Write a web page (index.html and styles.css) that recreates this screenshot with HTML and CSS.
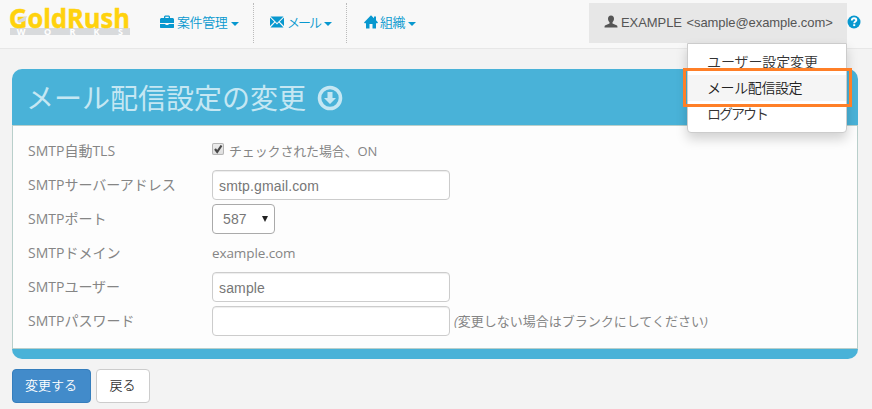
FILE: index.html
```html
<!DOCTYPE html>
<html lang="ja">
<head>
<meta charset="utf-8">
<title>メール配信設定の変更</title>
<link rel="stylesheet" href="styles.css">
</head>
<body>
<header class="navbar">
  <a class="brand">
    <svg class="logo" width="120" height="32" viewBox="0 0 120 32">
      <rect x="0" y="24" width="120" height="7" fill="#d8dadc"/>
      <text class="logo-main" x="-1" y="24" textLength="121" lengthAdjust="spacingAndGlyphs">GoldRush</text>
      <path d="M7 17l7-4 3-1-2 5-6 2z" fill="#d8dadc"/>
      <g class="logo-sub"><text x="11" y="31">W</text><text x="37.500" y="31">O</text><text x="62.500" y="31">R</text><text x="86.500" y="31">K</text><text x="110.500" y="31">S</text></g>
    </svg>
  </a>
  <nav class="nav">
    <a class="nav-item nav-cases">
      <svg class="icon" width="14" height="14" viewBox="0 0 14 14"><path fill="currentColor" fill-rule="evenodd" d="M4 3V1.500L5 .5h4l1 1V3h3l1 1v4H0V4l1-1zM5.300 3h3.400V1.700H5.300zM0 9h5.500v1h3V9H14v3.500l-.5.500H.5l-.5-.5z"/></svg>
      <span class="nav-text">案件管理</span><span class="caret"></span>
    </a>
    <a class="nav-item nav-mail">
      <svg class="icon" width="14" height="14" viewBox="0 0 14 14"><path fill="currentColor" d="M.5 1.500h13L7 8zM0 2.500L4.300 6.800 0 11zM14 2.500V11L9.700 6.800zM.5 12.500l4.600-4.900L7 9.500l1.900-1.900 4.600 4.900z"/></svg>
      <span class="nav-text">メール</span><span class="caret"></span>
    </a>
    <a class="nav-item nav-org">
      <svg class="icon" width="14" height="14" viewBox="0 0 14 14"><path fill="currentColor" d="M7 .3l3 3V1.500h2v3.800l2 2.200-.7.700H12V13.500H8.500V9h-3v4.500H2V8.200H.7L0 7.500z"/></svg>
      <span class="nav-text">組織</span><span class="caret"></span>
    </a>
  </nav>
  <div class="account">
    <a class="user">
      <svg class="icon" width="14" height="14" viewBox="0 0 14 14"><path fill="currentColor" d="M7 .5c2 0 3 1.500 3 3.300 0 1.600-.7 2.700-1.500 3.500v1.200l4 1.700c.8.400 1 1 1 2.300H.5c0-1.300.2-1.900 1-2.300l4-1.700V7.300C4.700 6.500 4 5.400 4 3.800 4 2 5 .5 7 .5z"/></svg>
      <span>EXAMPLE &lt;sample@example.com&gt;</span>
    </a>
    <ul class="menu">
      <li class="menu-item">ユーザー設定変更</li>
      <li class="menu-item active">メール配信設定</li>
      <li class="menu-item last">ログアウト</li>
    </ul>
    <div class="highlight"></div>
  </div>
  <a class="help">
    <svg width="14" height="14" viewBox="0 0 14 14"><circle cx="7" cy="7" r="6.500" fill="#0898cf"/><path d="M4.800 5.500C4.800 3.900 5.800 3.300 7 3.300s2.300.7 2.300 1.900C9.300 6.600 7.200 6.600 7.200 8.300" fill="none" stroke="#fff" stroke-width="1.900"/><path d="M6.200 9.200h2v1.900h-2z" fill="#fff"/></svg>
  </a>
</header>

<main class="panel">
  <h1 class="panel-title">
    <span>メール配信設定の変更</span>
    <svg width="26" height="26" viewBox="0 0 26 26"><circle cx="13" cy="13" r="10.500" fill="none" stroke="currentColor" stroke-width="3.600"/><path fill="currentColor" d="M10.500 7h5v6h3.500l-6 6-6-6h3.500z"/></svg>
  </h1>
  <form class="panel-body">
    <div class="row"><label class="label">SMTP自動TLS</label>
      <span class="check"><svg width="12" height="12" viewBox="0 0 12 12"><path d="M3 6l2.200 2.800L9.500 2.500" fill="none" stroke="#484848" stroke-width="2.200"/></svg></span>
      <span class="note">チェックされた場合、ON</span></div>
    <div class="row"><label class="label">SMTPサーバーアドレス</label><input class="field" type="text" value="smtp.gmail.com"></div>
    <div class="row"><label class="label">SMTPポート</label><span class="select"><span>587</span><i class="arrow"></i></span></div>
    <div class="row"><label class="label">SMTPドメイン</label><span class="value">example.com</span></div>
    <div class="row"><label class="label">SMTPユーザー</label><input class="field" type="text" value="sample"></div>
    <div class="row"><label class="label">SMTPパスワード</label><input class="field" type="password"><span class="hint"><i>(</i>変更しない場合はブランクにしてください<i>)</i></span></div>
  </form>
</main>
<div class="actions">
  <button class="btn primary">変更する</button>
  <button class="btn">戻る</button>
</div>
</body>
</html>
```
FILE: styles.css
```css
* { box-sizing: border-box; }
body {
  margin: 0;
  height: 409px;
  overflow: hidden;
  background: #f3f3f3;
  color: #858585;
  font: 14px/20px "Open Sans", "Noto Sans CJK JP", sans-serif;
}
svg { display: block; flex: none; }
.navbar {
  display: flex;
  height: 49px;
  padding-top: 3px;
  background: #f8f8f8;
  border-bottom: 1px solid #e7e7e7;
}
.brand { width: 120px; margin: 1px 19px 0 10px; }
.logo { overflow: visible; }
.logo-main { font: 700 27px "Open Sans", sans-serif; fill: #ffd20d; stroke: #ffd20d; stroke-width: .5px; }
.logo-sub { font: 700 9px "Open Sans", sans-serif; fill: #fff; text-anchor: middle; }
.nav { display: flex; height: 40px; color: #0898cf; }
.nav-item {
  display: flex;
  align-items: center;
  padding-left: 11px;
  font: 350 13px/20px "Noto Sans CJK JP", sans-serif;
  border-right: 1px dotted #bbb;
}
.nav-item .icon { margin: -2px 3px 0 0; }
.nav-text { margin-top: -2px; }
.nav-cases { width: 105px; }
.nav-mail { width: 93px; padding-left: 16px; }
.nav-org { width: 90px; padding-left: 17px; border: 0; }
.nav-cases .nav-text { letter-spacing: -.4px; }
.nav-mail .nav-text { letter-spacing: -2px; }
.nav-org .nav-text { letter-spacing: -.5px; margin-left: -1px; }
.caret {
  border: 4px solid transparent;
  border-top-color: currentColor;
  border-bottom: 0;
  margin: 1px 0 0 4px;
}
.nav-org .caret { margin-left: 3px; }
.account { position: relative; width: 258px; margin-left: auto; }
.user {
  display: flex;
  align-items: center;
  height: 40px;
  padding-left: 15px;
  background: #e7e7e7;
  color: #555;
  font: 13px/20px "Liberation Sans", Arial, sans-serif;
  letter-spacing: -.07px;
  word-spacing: 1px;
  white-space: nowrap;
}
.user .icon { margin: -3px 3px 0 0; }
.user span { margin-top: -1px; }
.help { width: 25px; padding: 12px 0 0; }
.menu {
  position: absolute;
  z-index: 1;
  top: 40px;
  right: 0;
  width: 160px;
  margin: 0;
  padding: 5px 0;
  list-style: none;
  background: #fff;
  border: 1px solid #ccc;
  border-radius: 0 0 4px 4px;
  box-shadow: 0 6px 12px rgba(0, 0, 0, .175);
  color: #333;
}
.menu-item {
  height: 26px;
  padding-left: 19px;
  font: 350 14px/24px "Noto Sans CJK JP", sans-serif;
  letter-spacing: -.1px;
}
.menu-item.active { background: #f5f5f5; color: #222; letter-spacing: -.4px; }
.menu-item.last { letter-spacing: -2px; }
.highlight {
  position: absolute;
  z-index: 2;
  top: 65px;
  left: 94px;
  width: 169px;
  height: 39px;
  border: 3px solid #ff7f27;
}
.panel {
  width: 846px;
  height: 290px;
  margin: 20px 0 0 12px;
  padding-bottom: 10px;
  background: #49b2d8;
  border-radius: 10px;
}
.panel-title {
  display: flex;
  align-items: center;
  gap: 11px;
  height: 56px;
  margin: 0;
  padding-left: 14px;
  color: #c5e7f3;
  font: 400 28px/54px "Noto Sans CJK JP", sans-serif;
}
.panel-title svg { margin-top: 2px; }
.panel-body {
  height: 224px;
  padding: 8px 15px;
  background: #fdfdfd;
  border: 1px solid #b9cfcb;
}
.row { display: flex; align-items: center; height: 34px; }
.label { width: 184px; }
.value { font-size: 13.5px; letter-spacing: -.1px; }
.check {
  width: 12px;
  height: 12px;
  margin: -4px 5px 0 0;
  background: linear-gradient(#eee, #ddd);
  box-shadow: 0 0 0 1px #b5b5b5 inset;
  border-radius: 2px;
}
.note, .hint { font-size: 13px; }
.note { letter-spacing: -.15px; }
.hint { margin-left: 4px; }
.field, .select {
  height: 30px;
  background: #fff;
  border: 1px solid #ccc;
  border-radius: 4px;
  color: #777;
  font: 14px/20px "Liberation Sans", Arial, sans-serif;
  letter-spacing: .15px;
}
.field { width: 238px; padding: 1px 6px 0; box-shadow: inset 0 1px 1px rgba(0, 0, 0, .075); }
.select {
  display: flex;
  align-items: center;
  justify-content: space-between;
  width: 63px;
  padding: 0 6px 0 10px;
  border-color: #aaa;
}
.arrow { border: 3px solid transparent; border-top: 6px solid #222; border-bottom: 0; }
.actions { display: flex; gap: 5px; padding: 10px 12px; }
.btn {
  height: 34px;
  padding: 0 1px 2px 0;
  width: 54px;
  background: #fff;
  border: 1px solid #ccc;
  border-radius: 4px;
  color: #333;
  font: 350 13px/20px "Noto Sans CJK JP", sans-serif;
}
.btn.primary { width: 79px; background: #428bca; border-color: #357ebd; color: #fff; }
```
